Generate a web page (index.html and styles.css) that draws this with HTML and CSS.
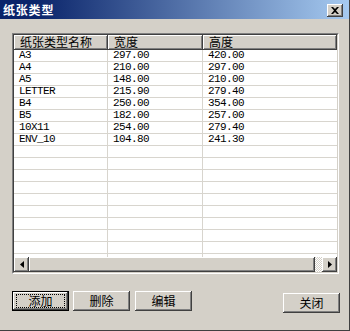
FILE: index.html
```html
<!DOCTYPE html>
<html lang="zh-CN">
<head>
    <meta charset="UTF-8">
    <title>纸张类型</title>
    <link rel="stylesheet" href="styles.css">
</head>
<body>
    <div class="window">
        <div class="title-bar">
            <span class="title">纸张类型</span>
            <span class="close-btn">
                <svg width="8" height="7" viewBox="0 0 8 7">
                    <path d="M0 0h2l2 2 2-2h2L5 3.5 8 7H6L4 5 2 7H0l3-3.5z" fill="#000"/>
                </svg>
            </span>
        </div>

        <div class="list-outer">
            <div class="list-inner">
                <div class="list-header">
                    <div class="hcell c1">纸张类型名称</div>
                    <div class="hcell c2">宽度</div>
                    <div class="hcell c3">高度</div>
                </div>
                <div class="list-rows" id="rows"></div>
                <div class="hscroll">
                    <div class="sb-btn">
                        <svg width="4" height="7" viewBox="0 0 4 7"><path d="M4 0v7L0 3.5z" fill="#000"/></svg>
                    </div>
                    <div class="sb-thumb"></div>
                    <div class="sb-track"></div>
                    <div class="sb-btn">
                        <svg width="4" height="7" viewBox="0 0 4 7"><path d="M0 0v7l4-3.5z" fill="#000"/></svg>
                    </div>
                </div>
            </div>
        </div>

        <div class="buttons">
            <div class="btn default"><span class="focus">添加</span></div>
            <div class="btn">删除</div>
            <div class="btn">编辑</div>
            <div class="btn close">关闭</div>
        </div>
    </div>
    <script>
        const papers = [
            ['A3', '297.00', '420.00'],
            ['A4', '210.00', '297.00'],
            ['A5', '148.00', '210.00'],
            ['LETTER', '215.90', '279.40'],
            ['B4', '250.00', '354.00'],
            ['B5', '182.00', '257.00'],
            ['10X11', '254.00', '279.40'],
            ['ENV_10', '104.80', '241.30']
        ];
        const rows = document.getElementById('rows');

        for (let i = 0; i < 18; i++) {
            const p = papers[i] || ['', '', ''];
            const row = document.createElement('div');
            row.className = 'row';
            p.forEach((text, j) => {
                const cell = document.createElement('div');
                cell.className = 'cell c' + (j + 1);
                cell.textContent = text;
                row.appendChild(cell);
            });
            rows.appendChild(row);
        }
    </script>
</body>
</html>
```

FILE: styles.css
```css
body {
    margin: 0;
    font-family: "Noto Sans CJK SC", sans-serif;
    font-size: 12px;
    background: #d4d0c8;
}

.window {
    width: 349px;
    height: 330px;
    background: #d4d0c8;
    border-right: 1px solid #404040;
    border-bottom: 1px solid #404040;
    display: flex;
    flex-direction: column;
    overflow: hidden;
}

.title-bar {
    height: 19px;
    background: linear-gradient(to right, #0a246a 10%, #a6caf0);
    display: flex;
    align-items: center;
    padding: 0 6px 0 3px;
}

.title {
    color: #fff;
    font-weight: bold;
    font-size: 12px;
    letter-spacing: 0.8px;
    line-height: 19px;
    flex: 1;
}

.close-btn {
    width: 16px;
    height: 13px;
    margin-top: 1px;
    background: #d4d0c8;
    box-shadow: inset -1px -1px #404040, inset 1px 1px #fff, inset -2px -2px #808080;
    display: flex;
    align-items: center;
    justify-content: center;
}

.list-outer {
    margin: 14px 0 0 12px;
    width: 325px;
    height: 239px;
    border: 1px solid;
    border-color: #808080 #fff #fff #808080;
}

.list-inner {
    height: 237px;
    border: 1px solid;
    border-color: #404040 #d4d0c8 #d4d0c8 #404040;
    background: #fff;
    display: flex;
    flex-direction: column;
}

.list-header {
    display: flex;
    height: 15px;
    flex-shrink: 0;
}

.hcell {
    height: 15px;
    line-height: 14px;
    padding-left: 6px;
    box-sizing: border-box;
    background: #d4d0c8;
    box-shadow: inset -1px -1px #404040, inset 1px 1px #fff, inset -2px -2px #808080;
}

.c1 { width: 94px; }
.c2 { width: 95px; }
.c3 { flex: 1; }

.list-rows {
    flex: 1;
    overflow: hidden;
}

.row {
    display: flex;
    height: 12px;
    border-bottom: 1px solid #d8d5ce;
    box-sizing: border-box;
}

.cell {
    font-family: "Liberation Mono", "Noto Sans CJK SC", monospace;
    font-size: 11px;
    letter-spacing: -0.6px;
    line-height: 11px;
    padding-left: 5px;
    box-sizing: border-box;
    color: #000;
}

.cell.c1, .cell.c2 {
    border-right: 1px solid #d8d5ce;
}

.hscroll {
    display: flex;
    height: 15px;
    flex-shrink: 0;
}

.sb-btn {
    width: 15px;
    height: 15px;
    background: #d4d0c8;
    box-shadow: inset -1px -1px #404040, inset 1px 1px #fff, inset -2px -2px #808080;
    display: flex;
    align-items: center;
    justify-content: center;
}

.sb-thumb {
    width: 286px;
    background: #d4d0c8;
    box-shadow: inset -1px -1px #404040, inset 1px 1px #fff, inset -2px -2px #808080;
}

.sb-track {
    flex: 1;
    background: repeating-conic-gradient(#fff 0 25%, #d4d0c8 0 50%) 0 0 / 2px 2px;
}

.buttons {
    display: flex;
    align-items: flex-start;
    margin-top: 17px;
    padding-left: 12px;
}

.btn {
    width: 57px;
    height: 20px;
    line-height: 20px;
    text-align: center;
    box-sizing: border-box;
    background: #d4d0c8;
    box-shadow: inset -1px -1px #404040, inset 1px 1px #fff, inset -2px -2px #808080;
    margin-right: 5px;
}

.btn.default {
    border: 1px solid #000;
    display: flex;
    align-items: center;
    justify-content: center;
    margin-right: 4px;
}

.focus {
    display: block;
    width: 47px;
    height: 12px;
    line-height: 12px;
    border: 1px dotted #000;
}

.btn.close {
    margin: 2px 9px 0 auto;
}
```
